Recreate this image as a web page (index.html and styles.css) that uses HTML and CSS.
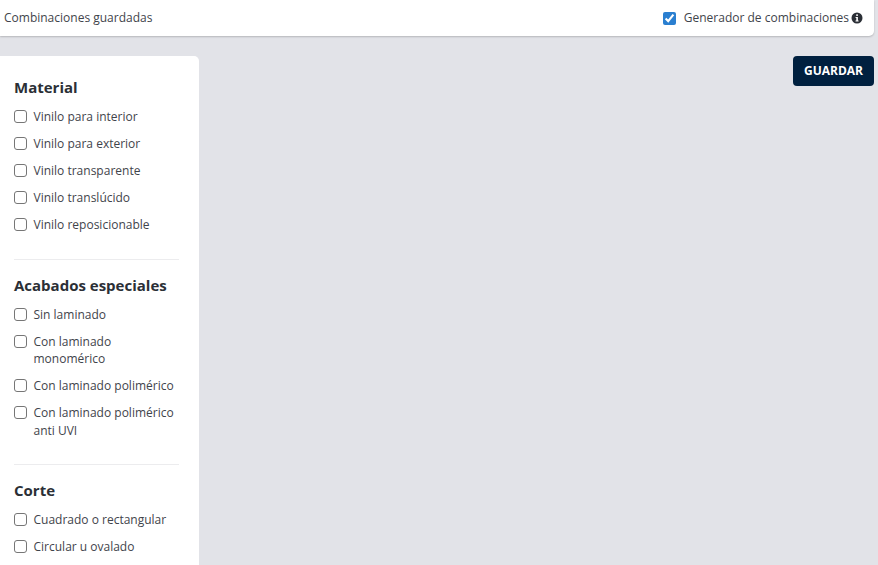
FILE: index.html
```html
<!DOCTYPE html>
<html lang="es">
<head>
<meta charset="utf-8">
<title>Combinaciones</title>
<link rel="stylesheet" href="styles.css">
</head>
<body>
<header class="topbar">
  <span class="topbar-title">Combinaciones guardadas</span>
  <label class="generator">
    <input class="generator-check" type="checkbox" checked>
    <span>Generador de combinaciones</span>
    <svg class="info" viewBox="0 0 12 12" aria-hidden="true"><circle cx="6" cy="6" r="5.5" fill="#2b2f36"/><rect x="5.2" y="2.3" width="1.7" height="1.7" rx=".4" fill="#fff"/><path d="M4.6 5h2.3v3.4h.7v1H4.5v-1h.8V6h-.7z" fill="#fff"/></svg>
  </label>
</header>
<main class="content">
  <aside class="filters">
    <section class="group">
      <h2>Material</h2>
      <label class="option"><input type="checkbox"><span>Vinilo para interior</span></label>
      <label class="option"><input type="checkbox"><span>Vinilo para exterior</span></label>
      <label class="option"><input type="checkbox"><span>Vinilo transparente</span></label>
      <label class="option"><input type="checkbox"><span>Vinilo translúcido</span></label>
      <label class="option"><input type="checkbox"><span>Vinilo reposicionable</span></label>
    </section>
    <section class="group">
      <h2>Acabados especiales</h2>
      <label class="option"><input type="checkbox"><span>Sin laminado</span></label>
      <label class="option"><input type="checkbox"><span>Con laminado monomérico</span></label>
      <label class="option"><input type="checkbox"><span>Con laminado polimérico</span></label>
      <label class="option"><input type="checkbox"><span>Con laminado polimérico anti UVI</span></label>
    </section>
    <section class="group">
      <h2>Corte</h2>
      <label class="option"><input type="checkbox"><span>Cuadrado o rectangular</span></label>
      <label class="option"><input type="checkbox"><span>Circular u ovalado</span></label>
    </section>
  </aside>
  <div class="actions"><button class="save" type="button">GUARDAR</button></div>
</main>
</body>
</html>
```
FILE: styles.css
```css
* { box-sizing: border-box; }
html, body { height: 100%; }
body {
  margin: 0;
  height: 565px;
  overflow: hidden;
  background: #e2e3e8;
  color: #3f444b;
  font-family: "Open Sans", sans-serif;
  font-size: 12px;
  line-height: 18px;
}
.topbar {
  display: flex;
  justify-content: space-between;
  align-items: center;
  width: 874px;
  height: 36px;
  padding: 0 11px 0 4px;
  background: #fff;
  border-radius: 0 0 5px 0;
  box-shadow: 0 1px 2px rgba(0, 0, 0, .2);
}
.generator { display: flex; align-items: center; }
.generator-check {
  width: 13px;
  height: 13px;
  margin: 0 8px 0 0;
  accent-color: #2a7fd0;
}
.info { width: 12px; height: 12px; margin-left: 2px; }
.content {
  display: flex;
  justify-content: space-between;
  align-items: flex-start;
  width: 874px;
  margin-top: 20px;
}
.filters {
  width: 199px;
  height: 520px;
  padding: 20px 20px 0 14px;
  background: #fff;
  border-radius: 0 5px 0 0;
}
.group + .group {
  margin-top: 25px;
  padding-top: 14px;
  border-top: 1px solid #ececee;
}
.group h2 {
  margin: 0 0 10px;
  font-size: 15px;
  line-height: 22px;
  font-weight: 700;
  color: #2b2f36;
}
.option {
  display: flex;
  align-items: flex-start;
  margin-bottom: 9.5px;
  line-height: 17.5px;
}
.group .option:last-child { margin-bottom: 0; }
.option input {
  flex: none;
  width: 13px;
  height: 13px;
  margin: 2px 6.5px 0 0;
  appearance: none;
  background: #fff;
  border: 1px solid #767676;
  border-radius: 3px;
}
.save {
  width: 81px;
  height: 30px;
  padding: 0 0 2px;
  border: 0;
  border-radius: 4px;
  background: #00203f;
  color: #fff;
  font-family: inherit;
  font-size: 12px;
  font-weight: 700;
}
```
